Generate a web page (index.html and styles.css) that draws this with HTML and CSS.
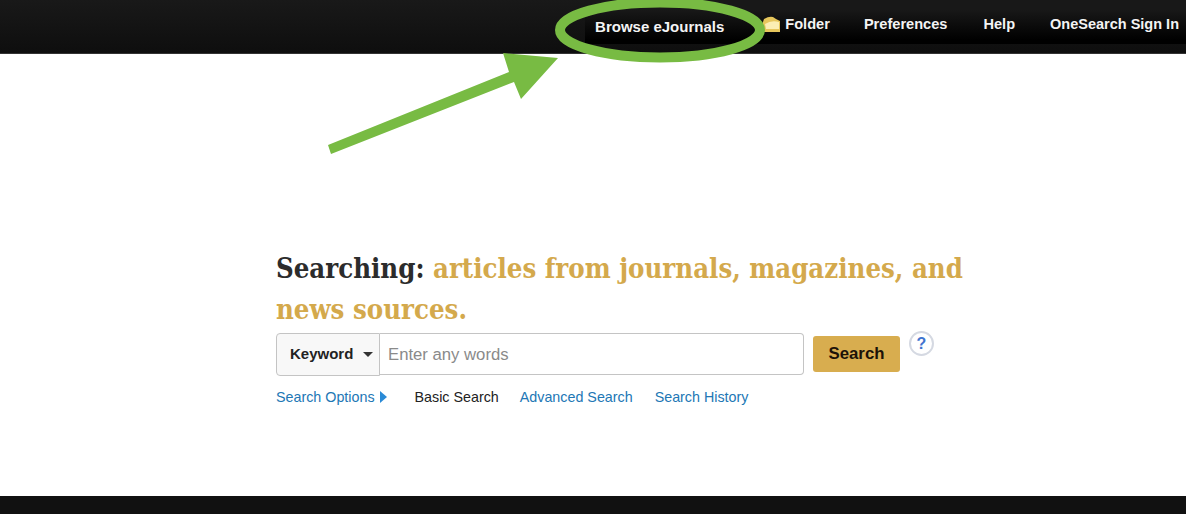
FILE: index.html
```html
<!DOCTYPE html>
<html lang="en">
<head>
<meta charset="utf-8">
<title>OneSearch</title>
<link rel="stylesheet" href="styles.css">
</head>
<body>
<header class="topbar">
  <nav class="nav">
    <a class="nav-item nav-browse" href="#">Browse eJournals</a>
    <a class="nav-item nav-folder" href="#">
      <svg class="folder-icon" width="18" height="17" viewBox="0 0 18 17"><path d="M0 9 L2 3 Q7 0 11 1 L14 3 L18 5 L18 16 L2 16 Z" fill="#e6c65c"/><path d="M3 8 Q9 4 17 6 L17 13 L4 13 Z" fill="#fbeeb4"/></svg>
      <span>Folder</span>
    </a>
    <a class="nav-item nav-prefs" href="#">Preferences</a>
    <a class="nav-item nav-help" href="#">Help</a>
    <a class="nav-item nav-signin" href="#">OneSearch Sign In</a>
  </nav>
</header>
<main class="main">
  <h1 class="title"><span class="title-label">Searching:</span> articles from journals, magazines, and news sources.</h1>
  <form class="search-row">
    <div class="search-box">
      <button type="button" class="field-select">Keyword<span class="caret"></span></button>
      <div class="search-input">Enter any words</div>
    </div>
    <button type="button" class="search-btn">Search</button>
    <span class="help-badge">?</span>
  </form>
  <div class="links">
    <a class="link link-options" href="#">Search Options<span class="tri"></span></a>
    <span class="link-current">Basic Search</span>
    <a class="link" href="#">Advanced Search</a>
    <a class="link" href="#">Search History</a>
  </div>
</main>
<footer class="footer"></footer>
<svg class="annotation" width="1186" height="514" viewBox="0 0 1186 514">
  <ellipse cx="660" cy="30" rx="100" ry="27.5" fill="none" stroke="#78bb43" stroke-width="10"/>
  <polygon points="328,145 509,72 503,53 558,58 521,99 514,82 331,154" fill="#78bb43"/>
</svg>
</body>
</html>
```
FILE: styles.css
```css
* { box-sizing: border-box; }
html, body { margin: 0; padding: 0; height: 100%; overflow: hidden; }
body {
  display: flex;
  flex-direction: column;
  height: 514px;
  background: #fff;
  font-family: "Liberation Sans", Arial, sans-serif;
  position: relative;
}
.topbar {
  height: 54px;
  flex: none;
  background: linear-gradient(#191919, #0e0e0e);
  border-bottom: 1px solid #333;
}
.nav {
  display: flex;
  justify-content: flex-end;
  align-items: flex-start;
  height: 44px;
  margin-left: 585px;
  padding-right: 7px;
  background: linear-gradient(#181818 10px, #000 40px);
}
.nav-item {
  color: #f4f4f4;
  font-size: 14.6px;
  font-weight: 700;
  text-decoration: none;
  line-height: 17px;
  padding-top: 16px;
  margin-left: 34px;
  white-space: nowrap;
}
.nav-prefs { margin-right: 2px; }
.nav-help { margin-right: 1px; }
.nav-signin { font-size: 14.5px; }
.nav-browse { padding-top: 18px; margin-right: 38px; font-size: 15px; }
.nav-folder { display: flex; align-items: flex-start; gap: 5px; margin-left: 0; }
.folder-icon { margin-top: 0; }
.main { flex: 1; padding: 194px 0 0 276px; }
.title {
  margin: 0;
  width: 700px;
  font-family: "DejaVu Serif", "Liberation Serif", serif;
  font-stretch: condensed;
  font-size: 27.3px;
  line-height: 41px;
  font-weight: 700;
  color: #d4a94c;
}
.title-label { color: #2c2c2c; }
.search-row { display: flex; align-items: flex-start; margin-top: 3px; }
.search-box {
  display: flex;
  width: 528px;
  height: 43px;
}
.field-select {
  width: 104px;
  height: 43px;
  flex: none;
  background: #f8f8f8;
  border: 1px solid #c4c4c4;
  border-radius: 4px 0 0 4px;
  font: 700 15px "Liberation Sans", Arial, sans-serif;
  color: #222;
  padding: 0 0 2px 13px;
  text-align: left;
  display: flex;
  align-items: center;
}
.caret {
  width: 0;
  height: 0;
  margin-left: 10px;
  margin-top: 2px;
  border-left: 5.5px solid transparent;
  border-right: 5.5px solid transparent;
  border-top: 5px solid #333;
}
.search-input {
  flex: 1;
  height: 42px;
  border: 1px solid #c4c4c4;
  border-left: none;
  border-radius: 0 4px 4px 0;
  padding-left: 8px;
  font-size: 16.7px;
  line-height: 41px;
  color: #8a8a8a;
}
.search-btn {
  margin: 3px 0 0 9px;
  width: 87px;
  height: 36px;
  background: #d8ad4f;
  border: none;
  border-radius: 3px;
  font: 700 16.8px "Liberation Sans", Arial, sans-serif;
  color: #1c1208;
  padding: 0;
}
.help-badge {
  width: 25px;
  height: 25px;
  margin: -2px 0 0 9px;
  border: 2px solid #d5d9e2;
  border-radius: 50%;
  color: #3f74d0;
  font-size: 16px;
  font-weight: 700;
  text-align: center;
  line-height: 21px;
}
.links {
  display: flex;
  align-items: center;
  margin-top: 12px;
  font-size: 14.3px;
  line-height: 18px;
}
.link { color: #2277b5; text-decoration: none; }
.link-options { display: flex; align-items: center; }
.tri {
  margin-left: 5px;
  width: 0;
  height: 0;
  border-top: 6.5px solid transparent;
  border-bottom: 6.5px solid transparent;
  border-left: 7px solid #2a8ad6;
}
.link-current { color: #222; margin: 0 21px 0 28px; }
.link-current + .link { margin-right: 22px; }
.footer { height: 18px; flex: none; background: #111; }
.annotation { position: absolute; left: 0; top: 0; pointer-events: none; }
```
